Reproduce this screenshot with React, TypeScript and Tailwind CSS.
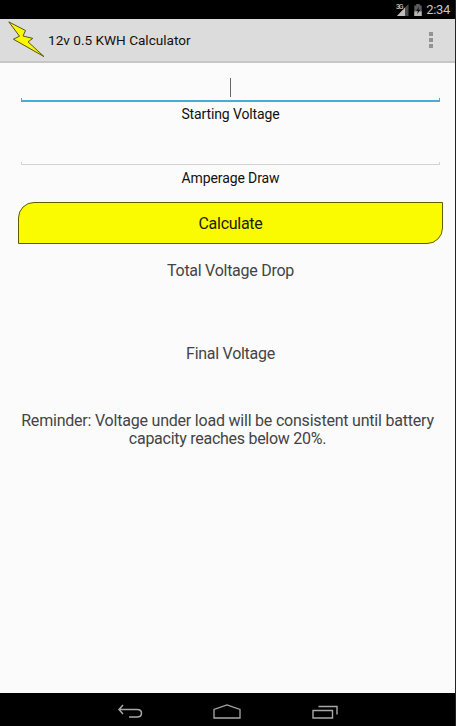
import { ReactNode } from "react";

function BoltLogo() {
  return (
    <svg width="38" height="38" viewBox="0 0 38 38" className="shrink-0">
      <path
        d="M0.8 0.9 L17.5 9.5 L15 15 L24.8 17.4 L20 20.8 L36 35.6 L5.4 18.2 L11.5 15.2 Z"
        fill="#fbf700"
        stroke="#55531c"
        strokeWidth="1"
        strokeLinejoin="round"
      />
    </svg>
  );
}

function StatusBar() {
  return (
    <div className="flex h-[19px] items-center justify-end bg-black pr-[5px] text-[#c4c4c4]">
      <svg width="13" height="14" viewBox="0 0 13 14" className="mr-[5px]">
        <path d="M12.5 1 V13 H1 Z" fill="#4a4a4a" />
        <path d="M9 4.5 V13 H1 Z" fill="#bdbdbd" />
        <rect width="7.5" height="6.5" fill="#000" />
        <text x="0" y="6" fontSize="7" fontWeight="500" fontFamily="Roboto, sans-serif" fill="#c4c4c4" textLength="7.5">
          3G
        </text>
      </svg>
      <svg width="8" height="12" viewBox="0 0 8 13" className="mr-[4px]">
        <path d="M2 0 H6 V1.5 H8 V13 H0 V1.5 H2 Z" fill="#5c5c5c" />
        <path d="M0 8 H8 V13 H0 Z" fill="#b5b5b5" />
        <path d="M5 3 L2 7.5 H4 L3 11 L6.5 6.3 H4.5 Z" fill="#111" />
      </svg>
      <span className="text-[13px] leading-[19px] tracking-[-0.3px]">2:34</span>
    </div>
  );
}

function ActionBar() {
  return (
    <div className="flex h-[44px] items-center border-b-2 border-[#c6c6c6] bg-[#dcdcdc] pl-2 pr-[22px]">
      <BoltLogo />
      <h1 className="ml-[2px] flex-1 text-[13.6px] text-[#111]">12v 0.5 KWH Calculator</h1>
      <div className="flex flex-col gap-[2px]">
        <span className="size-1 bg-[#939393]" />
        <span className="size-1 bg-[#939393]" />
        <span className="size-1 bg-[#939393]" />
      </div>
    </div>
  );
}

function Field({ label, focused = false }: { label: string; focused?: boolean }) {
  return (
    <div className="ml-[21px] mr-[15px] h-16">
      <div className="flex h-[35px] items-end justify-center pb-[1px]">
        {focused && <div className="h-[19px] w-px bg-[#666]" />}
      </div>
      <div className="h-2">
        <div className={focused ? "h-1 border-x border-b-2 border-[#45aed8]" : "h-[3px] border-x border-b border-[#d2d2d2]"} />
      </div>
      <p className="text-center text-[14px] leading-4 tracking-[-0.12px] text-[#111]">{label}</p>
    </div>
  );
}

function Result({ children }: { children: ReactNode }) {
  return <p className="text-center text-[16px] leading-[18px] tracking-[-0.27px] text-[#444]">{children}</p>;
}

function NavBar() {
  return (
    <div className="flex h-[33px] items-center bg-black pl-[117px] pt-[5px]">
      <svg width="27" height="16" viewBox="0 0 27 16" fill="none" stroke="#a8a8a8" strokeWidth="1.5">
        <path d="M6 1 L2 5.5 L6 10 M2 5.5 H20 Q24.5 5.5 24.5 9.2 Q24.5 13 20 13 H12" />
      </svg>
      <svg width="28" height="16" viewBox="0 0 28 16" fill="none" stroke="#a8a8a8" strokeWidth="1.3" className="ml-[69px]">
        <path d="M1 14 V5.5 L14 1 L27 5.5 V14 Z" />
      </svg>
      <svg width="27" height="16" viewBox="0 0 27 16" fill="none" stroke="#a8a8a8" strokeWidth="1.4" className="ml-[71px]">
        <path d="M1 6.5 H20.5 V14 H1 Z M6.5 2.5 H25 V10.5" />
      </svg>
    </div>
  );
}

export default function App() {
  return (
    <div className="flex h-[726px] w-[456px] flex-col overflow-hidden border-r border-[#242424] bg-[#fbfbfb] font-[Roboto,sans-serif]">
      <StatusBar />
      <ActionBar />
      <main className="flex-1">
        <Field label="Starting Voltage" focused />
        <Field label="Amperage Draw" />
        <button className="ml-[18px] mt-[11px] block h-[42px] w-[425px] rounded-br-[16px] rounded-tl-[16px] border border-[#5f5d08] bg-[#fbfb00] pt-[2px] text-[16px] tracking-[-0.27px] text-[#1c1c00]">
          Calculate
        </button>
        <div className="ml-[21px] mr-[15px] mt-[18px]">
          <Result>Total Voltage Drop</Result>
        </div>
        <div className="ml-[21px] mr-[15px] mt-[65px]">
          <Result>Final Voltage</Result>
        </div>
        <div className="mt-[49px]">
          <Result>
            <span className="tracking-[-0.21px]">Reminder: Voltage under load will be consistent until battery</span>
            <br />
            capacity reaches below 20%.
          </Result>
        </div>
      </main>
      <NavBar />
    </div>
  );
}
